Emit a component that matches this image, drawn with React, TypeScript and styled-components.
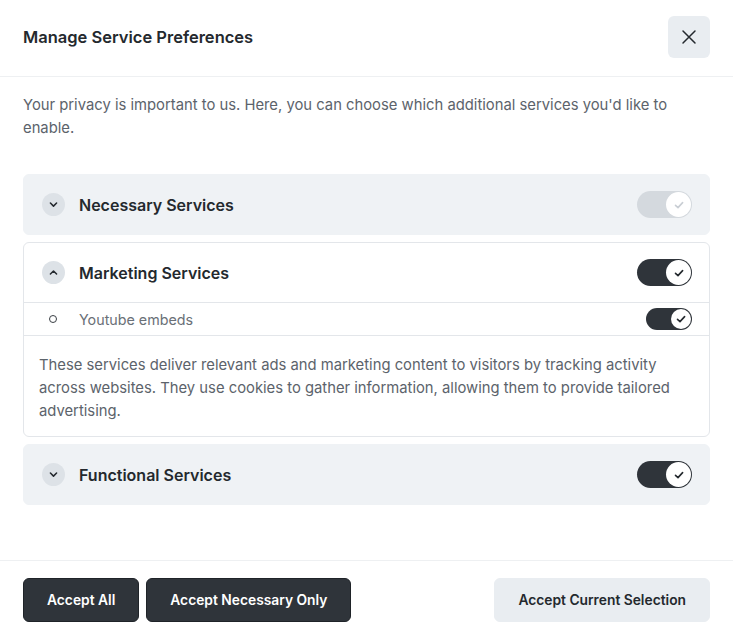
import React, { useState } from 'react';
import styled, { createGlobalStyle } from 'styled-components';

const GlobalStyle = createGlobalStyle`
  * { box-sizing: border-box; }
  body {
    margin: 0;
    background: #ffffff;
    font-family: Inter, "Noto Sans", "Liberation Sans", sans-serif;
    color: #24292e;
  }
`;

type Service = {
  id: string,
  title: string,
  checked: boolean,
  disabled?: boolean,
  open?: boolean,
  items?: string[],
  description?: string,
}

const services: Service[] = [
  { id: 'necessary', title: 'Necessary Services', checked: true, disabled: true },
  {
    id: 'marketing',
    title: 'Marketing Services',
    checked: true,
    open: true,
    items: ['Youtube embeds'],
    description: 'These services deliver relevant ads and marketing content to visitors by tracking activity across websites. They use cookies to gather information, allowing them to provide tailored advertising.',
  },
  { id: 'functional', title: 'Functional Services', checked: true },
];

const Check = ({ color }: { color: string }) => (
  <svg width="12" height="12" viewBox="0 0 12 12" fill="none">
    <path d="M2.5 6.3 L5 8.6 L9.6 3.6" stroke={color} strokeWidth="1.6" strokeLinecap="round" strokeLinejoin="round" />
  </svg>
);

const Chevron = ({ up }: { up?: boolean }) => (
  <svg width="11" height="11" viewBox="0 0 10 10" fill="none">
    <path d={up ? 'M2.2 6.4 L5 3.6 L7.8 6.4' : 'M2.2 3.7 L5 6.5 L7.8 3.7'} stroke="#24292e" strokeWidth="1.4" strokeLinecap="round" strokeLinejoin="round" />
  </svg>
);

const Toggle = ({ checked, disabled, small }: { checked: boolean, disabled?: boolean, small?: boolean }) => (
  <Track $disabled={!!disabled} $small={!!small} aria-checked={checked} role="switch">
    <Knob $disabled={!!disabled} $small={!!small}>
      <Check color={disabled ? '#c9ced4' : '#24292e'} />
    </Knob>
  </Track>
);

const App = () => {
  const [list] = useState<Service[]>(services);

  return (
    <>
      <GlobalStyle />
      <Dialog>
        <Header>
          <Title>Manage Service Preferences</Title>
          <CloseButton aria-label="Close">
            <svg width="16" height="16" viewBox="0 0 16 16" fill="none">
              <path d="M2 2 L14 14 M14 2 L2 14" stroke="#24292e" strokeWidth="1.5" strokeLinecap="round" />
            </svg>
          </CloseButton>
        </Header>
        <Body>
          <Intro>Your privacy is important to us. Here, you can choose which additional services you'd like to enable.</Intro>
          <Sections>
            {list.map(s => (
              <Section key={s.id} $open={!!s.open}>
                <SectionHead>
                  <ChevronCircle><Chevron up={s.open} /></ChevronCircle>
                  <SectionTitle>{s.title}</SectionTitle>
                  <Toggle checked={s.checked} disabled={s.disabled} />
                </SectionHead>
                {s.open && s.items && s.items.map(item => (
                  <SubRow key={item}>
                    <Bullet />
                    <SubLabel>{item}</SubLabel>
                    <Toggle checked small />
                  </SubRow>
                ))}
                {s.open && s.description && <Description>{s.description}</Description>}
              </Section>
            ))}
          </Sections>
        </Body>
        <Footer>
          <ButtonGroup>
            <Button $variant="dark">Accept All</Button>
            <Button $variant="dark">Accept Necessary Only</Button>
          </ButtonGroup>
          <Button $variant="light">Accept Current Selection</Button>
        </Footer>
      </Dialog>
    </>
  );
};

const Dialog = styled.div`
  width: 733px;
  height: 638px;
  display: flex;
  flex-direction: column;
  background: #fff;
`;

const Header = styled.div`
  display: flex;
  align-items: center;
  justify-content: space-between;
  padding: 16px 23px 18px 23px;
  border-bottom: 1px solid #eef0f2;
`;

const Title = styled.h2`
  margin: 0;
  font-size: 16.5px;
  font-weight: 600;
  color: #24292e;
`;

const CloseButton = styled.button`
  width: 42px;
  height: 42px;
  border: none;
  border-radius: 6px;
  background: #e9edf1;
  display: flex;
  align-items: center;
  justify-content: center;
  padding: 0;
  cursor: pointer;
`;

const Body = styled.div`
  flex: 1;
  padding: 17px 23px 0 23px;
`;

const Intro = styled.p`
  margin: 0 0 34px 0;
  font-size: 14.8px;
  line-height: 23px;
  color: #5c636b;
`;

const Sections = styled.div`
  display: flex;
  flex-direction: column;
  gap: 7px;
`;

const Section = styled.div<{ $open: boolean }>`
  border-radius: 6px;
  background: ${({ $open }) => $open ? '#fff' : '#eff2f5'};
  border: 1px solid ${({ $open }) => $open ? '#e3e6ea' : '#eff2f5'};
  overflow: hidden;
`;

const SectionHead = styled.div`
  display: flex;
  align-items: center;
  height: 59px;
  padding: 0 17px 0 18px;
`;

const ChevronCircle = styled.span`
  width: 23px;
  height: 23px;
  border-radius: 50%;
  background: #dde2e7;
  display: flex;
  align-items: center;
  justify-content: center;
  flex-shrink: 0;
`;

const SectionTitle = styled.span`
  flex: 1;
  margin-left: 14px;
  font-size: 16px;
  font-weight: 600;
  color: #24292e;
`;

const SubRow = styled.div`
  display: flex;
  align-items: center;
  height: 34px;
  padding: 0 17px 0 25px;
  border-top: 1px solid #e3e6ea;
  border-bottom: 1px solid #e3e6ea;
`;

const Bullet = styled.span`
  width: 8px;
  height: 8px;
  border-radius: 50%;
  border: 1.6px solid #3a3f45;
  flex-shrink: 0;
`;

const SubLabel = styled.span`
  flex: 1;
  margin-left: 22px;
  font-size: 14.3px;
  color: #6a7077;
`;

const Description = styled.p`
  margin: 0;
  padding: 18px 15px 13px 15px;
  font-size: 14.8px;
  line-height: 23px;
  color: #5c636b;
`;

const Track = styled.span<{ $disabled: boolean, $small: boolean }>`
  display: flex;
  align-items: center;
  justify-content: flex-end;
  width: ${({ $small }) => $small ? '46px' : '55px'};
  height: ${({ $small }) => $small ? '22px' : '27px'};
  border-radius: 14px;
  padding: 1px;
  background: ${({ $disabled }) => $disabled ? '#d4d9de' : '#2f343a'};
  flex-shrink: 0;
`;

const Knob = styled.span<{ $disabled: boolean, $small: boolean }>`
  width: ${({ $small }) => $small ? '20px' : '25px'};
  height: ${({ $small }) => $small ? '20px' : '25px'};
  border-radius: 50%;
  background: #fff;
  display: flex;
  align-items: center;
  justify-content: center;
`;

const Footer = styled.div`
  display: flex;
  align-items: center;
  justify-content: space-between;
  padding: 17px 23px 16px 23px;
  border-top: 1px solid #eef0f2;
`;

const ButtonGroup = styled.div`
  display: flex;
  gap: 7px;
`;

const Button = styled.button<{ $variant: 'dark' | 'light' }>`
  height: 44px;
  padding: 0 23px;
  border-radius: 6px;
  border: 1px solid ${({ $variant }) => $variant === 'dark' ? '#1f2328' : '#e9edf1'};
  background: ${({ $variant }) => $variant === 'dark' ? '#2f343a' : '#e9edf1'};
  color: ${({ $variant }) => $variant === 'dark' ? '#fff' : '#24292e'};
  font-family: inherit;
  font-size: 13.8px;
  font-weight: 600;
  cursor: pointer;
`;

export default App;
